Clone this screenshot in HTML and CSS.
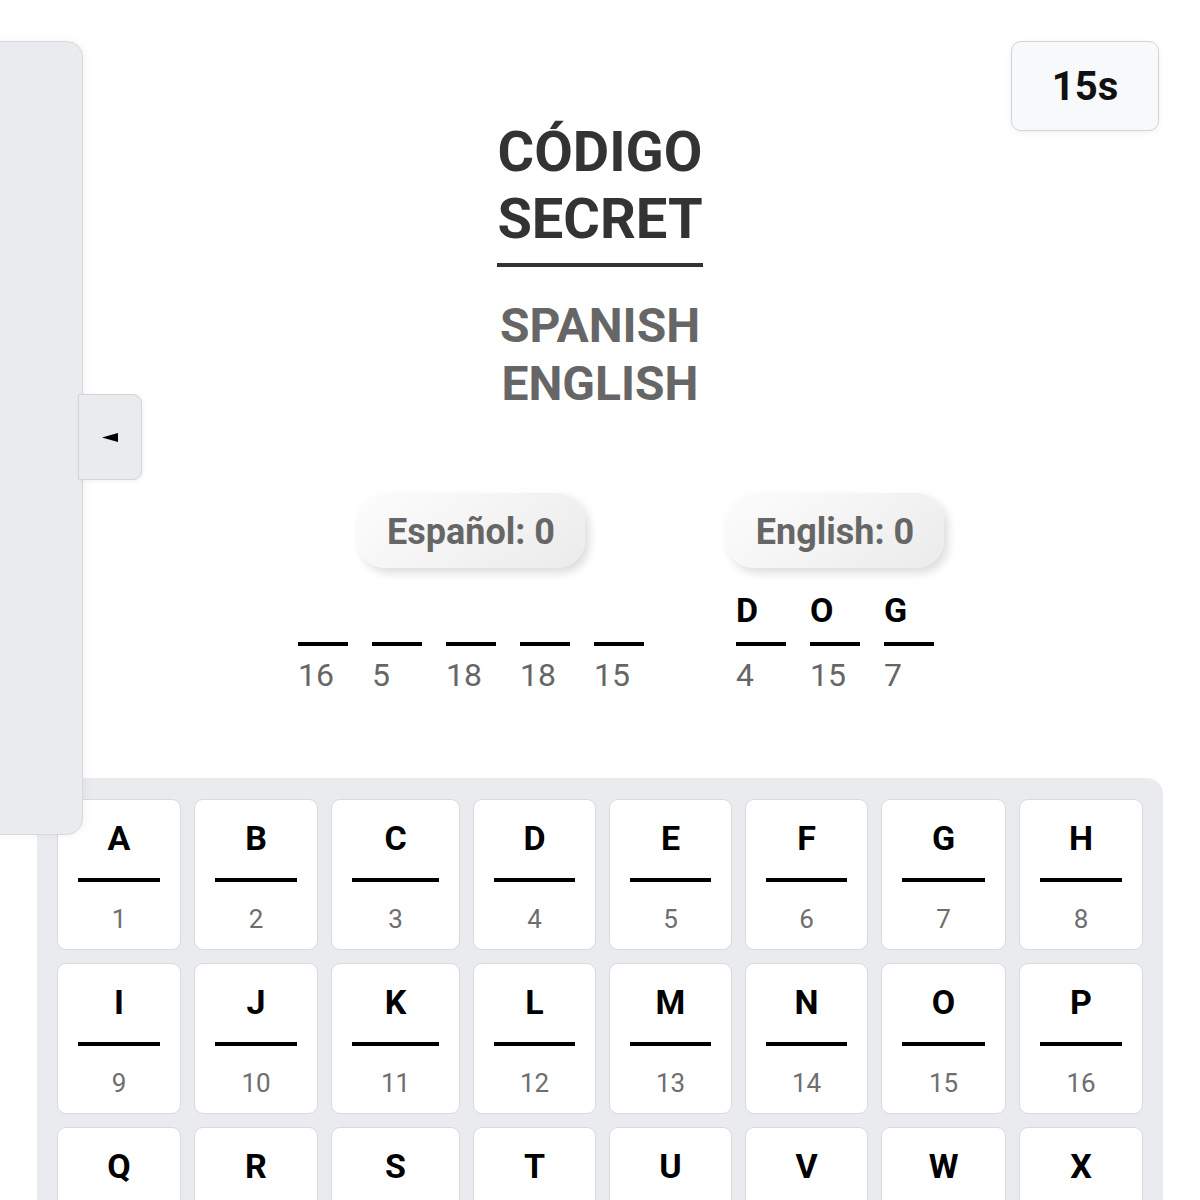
FILE: index.html
```html
<!DOCTYPE html>
<html lang="es">
<head>
	<meta charset="UTF-8">
	<title>Código Secret</title>
	<link rel="stylesheet" href="styles.css">
</head>
<body>
	<aside class="drawer">
		<button class="drawer-toggle" type="button">
			<svg width="16" height="9" viewBox="0 0 16 9"><polygon points="0,4.5 16,0 16,9" fill="#000"/></svg>
		</button>
	</aside>

	<div class="timer">15s</div>

	<main class="game">
		<h1 class="title">CÓDIGO<br>SECRET</h1>
		<div class="subtitle">SPANISH<br>ENGLISH</div>

		<div class="teams">
			<div class="team">
				<div class="score">Español: 0</div>
				<div class="word">
					<div class="slot"><span class="slot-letter"></span><span class="slot-blank"></span><span class="slot-num">16</span></div>
					<div class="slot"><span class="slot-letter"></span><span class="slot-blank"></span><span class="slot-num">5</span></div>
					<div class="slot"><span class="slot-letter"></span><span class="slot-blank"></span><span class="slot-num">18</span></div>
					<div class="slot"><span class="slot-letter"></span><span class="slot-blank"></span><span class="slot-num">18</span></div>
					<div class="slot"><span class="slot-letter"></span><span class="slot-blank"></span><span class="slot-num">15</span></div>
				</div>
			</div>
			<div class="team">
				<div class="score">English: 0</div>
				<div class="word">
					<div class="slot"><span class="slot-letter">D</span><span class="slot-blank"></span><span class="slot-num">4</span></div>
					<div class="slot"><span class="slot-letter">O</span><span class="slot-blank"></span><span class="slot-num">15</span></div>
					<div class="slot"><span class="slot-letter">G</span><span class="slot-blank"></span><span class="slot-num">7</span></div>
				</div>
			</div>
		</div>

		<div class="keyboard">
			<div class="key"><span class="key-letter">A</span><span class="key-line"></span><span class="key-num">1</span></div>
			<div class="key"><span class="key-letter">B</span><span class="key-line"></span><span class="key-num">2</span></div>
			<div class="key"><span class="key-letter">C</span><span class="key-line"></span><span class="key-num">3</span></div>
			<div class="key"><span class="key-letter">D</span><span class="key-line"></span><span class="key-num">4</span></div>
			<div class="key"><span class="key-letter">E</span><span class="key-line"></span><span class="key-num">5</span></div>
			<div class="key"><span class="key-letter">F</span><span class="key-line"></span><span class="key-num">6</span></div>
			<div class="key"><span class="key-letter">G</span><span class="key-line"></span><span class="key-num">7</span></div>
			<div class="key"><span class="key-letter">H</span><span class="key-line"></span><span class="key-num">8</span></div>
			<div class="key"><span class="key-letter">I</span><span class="key-line"></span><span class="key-num">9</span></div>
			<div class="key"><span class="key-letter">J</span><span class="key-line"></span><span class="key-num">10</span></div>
			<div class="key"><span class="key-letter">K</span><span class="key-line"></span><span class="key-num">11</span></div>
			<div class="key"><span class="key-letter">L</span><span class="key-line"></span><span class="key-num">12</span></div>
			<div class="key"><span class="key-letter">M</span><span class="key-line"></span><span class="key-num">13</span></div>
			<div class="key"><span class="key-letter">N</span><span class="key-line"></span><span class="key-num">14</span></div>
			<div class="key"><span class="key-letter">O</span><span class="key-line"></span><span class="key-num">15</span></div>
			<div class="key"><span class="key-letter">P</span><span class="key-line"></span><span class="key-num">16</span></div>
			<div class="key"><span class="key-letter">Q</span><span class="key-line"></span><span class="key-num">17</span></div>
			<div class="key"><span class="key-letter">R</span><span class="key-line"></span><span class="key-num">18</span></div>
			<div class="key"><span class="key-letter">S</span><span class="key-line"></span><span class="key-num">19</span></div>
			<div class="key"><span class="key-letter">T</span><span class="key-line"></span><span class="key-num">20</span></div>
			<div class="key"><span class="key-letter">U</span><span class="key-line"></span><span class="key-num">21</span></div>
			<div class="key"><span class="key-letter">V</span><span class="key-line"></span><span class="key-num">22</span></div>
			<div class="key"><span class="key-letter">W</span><span class="key-line"></span><span class="key-num">23</span></div>
			<div class="key"><span class="key-letter">X</span><span class="key-line"></span><span class="key-num">24</span></div>
			<div class="key"><span class="key-letter">Y</span><span class="key-line"></span><span class="key-num">25</span></div>
			<div class="key"><span class="key-letter">Z</span><span class="key-line"></span><span class="key-num">26</span></div>
		</div>
	</main>
</body>
</html>
```

FILE: styles.css
```css
body{
	margin: 0;
	background: #fff;
	font-family: Roboto, "Noto Sans", sans-serif;
	color: #333;
}

/* 侧边抽屉 */
.drawer{
	position: absolute;
	z-index: 100;
	top: 41px;
	left: -240px;
	width: 323px;
	height: 794px;
	box-sizing: border-box;
	border: 1px solid #d6d8db;
	border-radius: 16px;
	background: #e9ebee;
	box-shadow: 2px 0 8px rgba(0, 0, 0, 0.05);
}
.drawer-toggle{
	position: absolute;
	top: 352px;
	left: 317px;
	width: 64px;
	height: 86px;
	padding: 0;
	display: flex;
	align-items: center;
	justify-content: center;
	border: 1px solid #d3d5d8;
	border-radius: 0 9px 9px 0;
	background: #e9ebee;
	box-shadow: 1px 1px 4px rgba(0, 0, 0, 0.06);
	cursor: pointer;
}

/* 计时器 */
.timer{
	position: absolute;
	top: 41px;
	right: 41px;
	width: 148px;
	height: 90px;
	box-sizing: border-box;
	display: flex;
	align-items: center;
	justify-content: center;
	border: 1px solid #d2d4d6;
	border-radius: 10px;
	background: #f8f9fa;
	box-shadow: 0 2px 6px rgba(0, 0, 0, 0.06);
	font-size: 40px;
	font-weight: 700;
	color: #111;
}

.game{
	display: flex;
	flex-direction: column;
	align-items: center;
	padding-top: 119px;
}
.title{
	margin: 0;
	padding-bottom: 10px;
	border-bottom: 4px solid #333;
	font-size: 56px;
	line-height: 1.2;
	font-weight: 700;
	text-align: center;
	color: #333;
}
.subtitle{
	margin-top: 30px;
	font-size: 48px;
	line-height: 1.2;
	font-weight: 700;
	text-align: center;
	color: #666;
}

/* 分数与单词 */
.teams{
	align-self: stretch;
	display: flex;
	justify-content: center;
	gap: 18px;
	margin-top: 80px;
	padding-left: 106px;
}
.team{
	width: 346px;
	display: flex;
	flex-direction: column;
	align-items: center;
}
.score{
	padding: 18px 30px 14px;
	border-radius: 28px;
	background: linear-gradient(145deg, #fdfdfd, #ebebeb);
	box-shadow: 4px 5px 10px rgba(0, 0, 0, 0.14), -2px -2px 6px rgba(255, 255, 255, 0.9);
	font-size: 36px;
	line-height: 1.2;
	font-weight: 700;
	color: #666;
}
.word{
	display: flex;
	gap: 24px;
	margin-top: 22px;
}
.slot{
	width: 50px;
	display: flex;
	flex-direction: column;
}
.slot-letter{
	height: 40px;
	font-size: 34px;
	line-height: 40px;
	font-weight: 700;
	color: #000;
}
.slot-blank{
	height: 4px;
	margin-top: 12px;
	background: #000;
}
.slot-num{
	margin-top: 10px;
	font-size: 32px;
	line-height: 38px;
	color: #666;
}

/* 字母键盘 */
.keyboard{
	width: 1126px;
	box-sizing: border-box;
	margin-top: 84px;
	padding: 21px 20px 20px;
	display: grid;
	grid-template-columns: 124px 124px 129px 123px 123px 123px 125px 124px;
	gap: 13px;
	border-radius: 16px;
	background: #e9ebee;
}
.key{
	height: 151px;
	box-sizing: border-box;
	padding: 18px 20px 0;
	display: flex;
	flex-direction: column;
	align-items: center;
	border: 1px solid #d8dadd;
	border-radius: 9px;
	background: #fff;
}
.key-letter{
	font-size: 34px;
	line-height: 40px;
	font-weight: 700;
	color: #000;
}
.key-line{
	align-self: stretch;
	height: 4px;
	margin-top: 20px;
	background: #000;
}
.key-num{
	margin-top: 22px;
	font-size: 26px;
	line-height: 30px;
	color: #6e6e6e;
}
```
